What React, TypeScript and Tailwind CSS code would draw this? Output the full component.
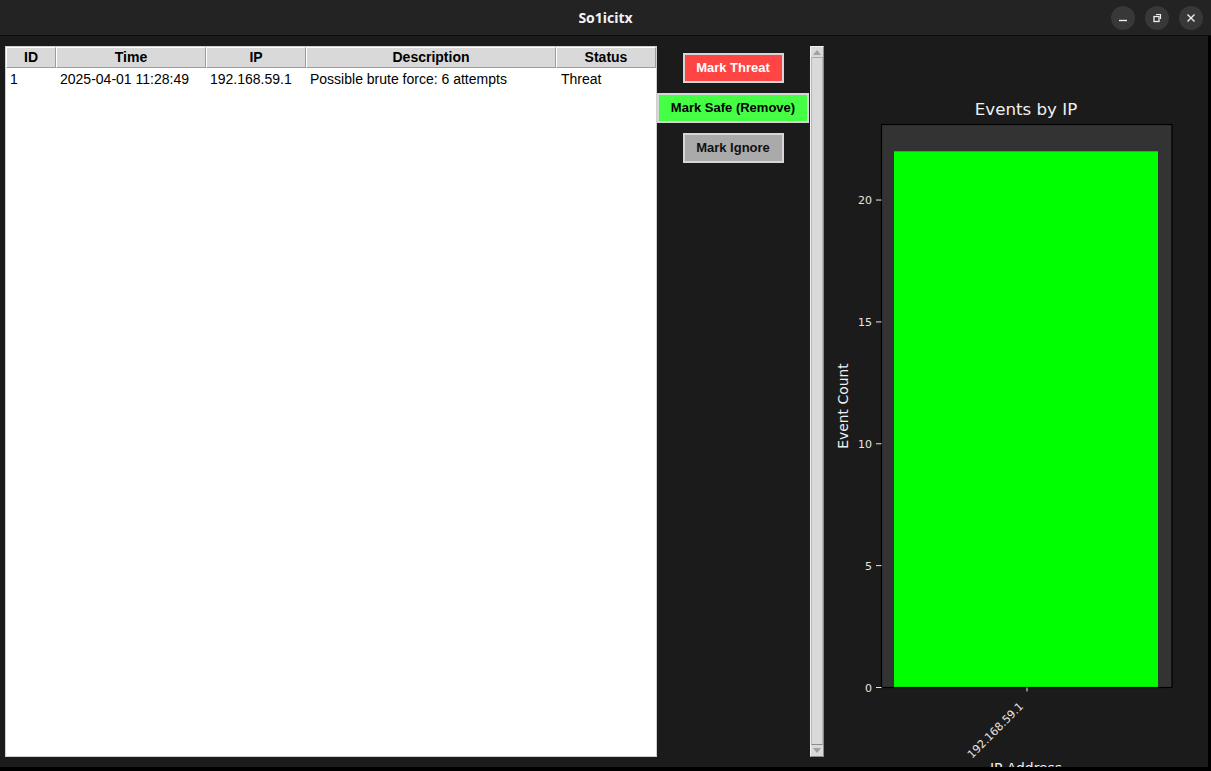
import React from "react";

const columns = [
  { key: "id", label: "ID", w: "w-[50px]" },
  { key: "time", label: "Time", w: "w-[150px]" },
  { key: "ip", label: "IP", w: "w-[100px]" },
  { key: "desc", label: "Description", w: "w-[250px]" },
  { key: "status", label: "Status", w: "w-[100px]" },
];

const rows = [
  {
    id: "1",
    time: "2025-04-01 11:28:49",
    ip: "192.168.59.1",
    desc: "Possible brute force: 6 attempts",
    status: "Threat",
  },
];

// valores del gráfico (matplotlib): 22 eventos para una sola IP
const chart = { count: 22, ymax: 23.1 };

function TitleBar() {
  return (
    <div className="relative flex h-[36px] items-center justify-center border-b border-[#0b0b0b] bg-[#232323]">
      <span className="text-[14px] font-bold text-[#f2f2f2] [font-family:'Noto_Sans',sans-serif]">So1icitx</span>
      <div className="absolute right-[8px] top-[6px] flex gap-[10px]">
        <div className="flex h-[24px] w-[24px] items-center justify-center rounded-full bg-[#383838]">
          <svg width="10" height="10" viewBox="0 0 10 10">
            <path d="M1 7.5h8" stroke="#f0f0f0" strokeWidth="1.4" />
          </svg>
        </div>
        <div className="flex h-[24px] w-[24px] items-center justify-center rounded-full bg-[#383838]">
          <svg width="10" height="10" viewBox="0 0 10 10">
            <rect x="2" y="3.5" width="5" height="5" fill="none" stroke="#f0f0f0" strokeWidth="1.3" />
            <path d="M4 1.5h4.5v4.5" fill="none" stroke="#f0f0f0" strokeWidth="1.1" />
          </svg>
        </div>
        <div className="flex h-[24px] w-[24px] items-center justify-center rounded-full bg-[#383838]">
          <svg width="10" height="10" viewBox="0 0 10 10">
            <path d="M1.5 1.5l7 7M8.5 1.5l-7 7" stroke="#f0f0f0" strokeWidth="1.4" />
          </svg>
        </div>
      </div>
    </div>
  );
}

function EventTable() {
  return (
    <div className="flex h-full w-[652px] flex-col border border-[#cfcfcf] bg-white [font-family:'Liberation_Sans',sans-serif]">
      <div className="flex h-[21px]">
        {columns.map((c) => (
          <div
            key={c.key}
            className={`${c.w} flex items-center justify-center border border-t-white border-l-white border-r-[#9c9c9c] border-b-[#9c9c9c] bg-[#d9d9d9] text-[14px] font-bold text-black`}
          >
            {c.label}
          </div>
        ))}
      </div>
      {rows.map((r) => (
        <div key={r.id} className="flex h-[23px] items-center text-[14px] text-black">
          <div className="w-[50px] pl-[4px]">{r.id}</div>
          <div className="w-[150px] pl-[4px]">{r.time}</div>
          <div className="w-[100px] pl-[4px]">{r.ip}</div>
          <div className="w-[250px] pl-[4px]">{r.desc}</div>
          <div className="w-[100px] pl-[5px]">{r.status}</div>
        </div>
      ))}
    </div>
  );
}

function ActionButtons() {
  return (
    <div className="flex w-[152px] flex-col items-center gap-[10px] pt-[17px] text-[13px] font-bold [font-family:'Liberation_Sans',sans-serif]">
      <button className="h-[30px] w-[101px] border-2 border-[#d6d6d6] bg-[#ff4444] text-white">Mark Threat</button>
      <button className="h-[30px] w-[152px] border-2 border-[#d6d6d6] bg-[#44ff44] text-black">Mark Safe (Remove)</button>
      <button className="h-[30px] w-[101px] border-2 border-[#d6d6d6] bg-[#aaaaaa] text-[#111]">Mark Ignore</button>
    </div>
  );
}

function Scrollbar() {
  return (
    <div className="my-[10px] ml-[1px] flex w-[14px] flex-col border border-t-[#f2f2f2] border-l-[#f2f2f2] border-r-[#8a8a8a] border-b-[#8a8a8a] bg-[#d9d9d9]">
      <div className="flex h-[11px] items-center justify-center border-b border-[#a8a8a8]">
        <svg width="8" height="5" viewBox="0 0 8 5">
          <path d="M0 5L4 0L8 5Z" fill="#a0a0a0" />
        </svg>
      </div>
      <div className="flex-1 border-x border-b border-[#b8b8b8] border-b-[#8a8a8a]" />
      <div className="flex h-[11px] items-center justify-center">
        <svg width="8" height="5" viewBox="0 0 8 5">
          <path d="M0 0L4 5L8 0Z" fill="#a0a0a0" />
        </svg>
      </div>
    </div>
  );
}

function EventsChart() {
  const top = 88.5;
  const bottom = 651.5;
  const left = 57.5;
  const right = 348;
  const scale = (bottom - top) / chart.ymax;
  const barTop = bottom - chart.count * scale;
  const ticks = [0, 5, 10, 15, 20];
  return (
    <svg width="384" height="731" className="block" fontFamily="'DejaVu Sans', sans-serif">
      <text x="202" y="79" textAnchor="middle" fontSize="16.7" fill="#f0f0f0">
        Events by IP
      </text>
      <rect x={left} y={top} width={right - left} height={bottom - top} fill="#333333" />
      <rect x="70" y={barTop} width="264" height={bottom - barTop} fill="#00ff00" />
      <rect x={left} y={top} width={right - left} height={bottom - top} fill="none" stroke="#000" strokeWidth="1.2" />
      {ticks.map((t) => {
        const y = bottom - t * scale;
        return (
          <g key={t}>
            <line x1="52" x2={left} y1={y} y2={y} stroke="#e6e6e6" strokeWidth="1" />
            <text x="48" y={y + 4} textAnchor="end" fontSize="11" fill="#e6e6e6">
              {t}
            </text>
          </g>
        );
      })}
      <line x1="203" x2="203" y1={bottom} y2={bottom + 4} stroke="#e6e6e6" strokeWidth="1" />
      <text x="200" y="671" textAnchor="end" fontSize="11" fill="#e6e6e6" transform="rotate(-45 200 671)">
        192.168.59.1
      </text>
      <text x="24" y="370" textAnchor="middle" fontSize="13.9" fill="#f0f0f0" transform="rotate(-90 24 370)">
        Event Count
      </text>
      <text x="202" y="737" textAnchor="middle" fontSize="13.9" fill="#f0f0f0">
        IP Address
      </text>
    </svg>
  );
}

export default function App() {
  return (
    <div className="h-[771px] w-[1211px] overflow-hidden bg-black">
      <TitleBar />
      <div className="flex h-[731px] w-[1208px] bg-[#1b1b1b]">
        <div className="py-[10px] pl-[5px]">
          <EventTable />
        </div>
        <ActionButtons />
        <Scrollbar />
        <EventsChart />
      </div>
    </div>
  );
}
